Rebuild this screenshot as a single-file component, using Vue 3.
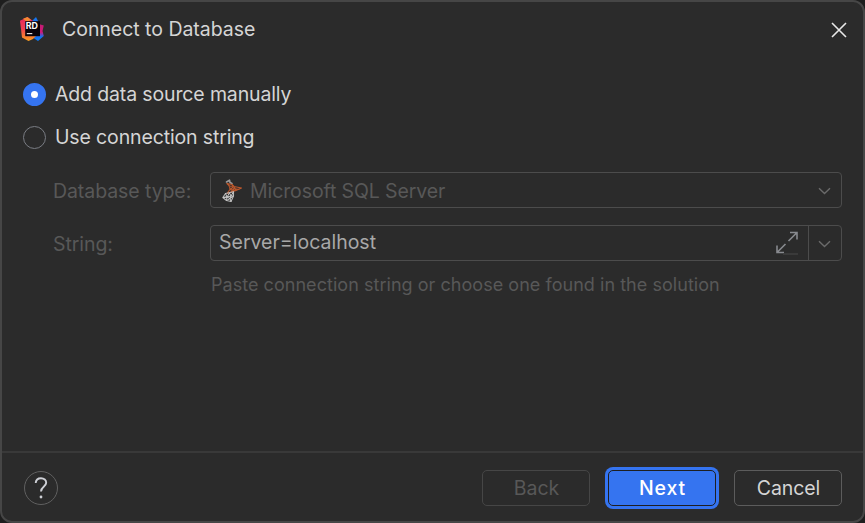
<script setup>
import { ref } from 'vue'

const mode = ref('manual')
const modes = [
  { id: 'manual', label: 'Add data source manually' },
  { id: 'string', label: 'Use connection string' },
]
</script>

<template>
  <div class="dialog">
    <header class="titlebar">
      <svg class="logo" viewBox="0 0 26 26">
        <defs>
          <linearGradient id="rd-left" x1="0" y1="0" x2="0" y2="1">
            <stop offset="0" stop-color="#e8265f" />
            <stop offset=".5" stop-color="#ee4150" />
            <stop offset="1" stop-color="#fba01e" />
          </linearGradient>
          <linearGradient id="rd-right" x1="0" y1="0" x2="0" y2="1">
            <stop offset="0" stop-color="#c21c72" />
            <stop offset=".5" stop-color="#d0197a" />
            <stop offset=".75" stop-color="#1670ee" />
            <stop offset="1" stop-color="#087cfa" />
          </linearGradient>
        </defs>
        <path d="M13 5 17 1 19 5 20 8H13Z" fill="#1676ef" />
        <path d="M18 7.5 24.8 9.5 23.5 15 24.8 20 19 25 14.5 22Z" fill="url(#rd-right)" />
        <path d="M1 4.8 8.5 1 14 5 17 20 14 23 9.5 25 3 21.5Z" fill="url(#rd-left)" />
        <path d="M4 2.8 8.5 1 12 4 8 6Z" fill="#f58a32" />
        <rect x="6.2" y="5.2" width="14.8" height="15" fill="#08030b" />
        <text x="6.8" y="12.8" class="logo-text" textLength="12.2" lengthAdjust="spacingAndGlyphs">RD</text>
        <rect x="7.8" y="17" width="5.5" height="1.2" fill="#ddd" />
      </svg>
      <h1>Connect to Database</h1>
      <button class="close" aria-label="Close">
        <svg viewBox="0 0 16 16"><path d="M1 1 15 15M15 1 1 15" /></svg>
      </button>
    </header>

    <main>
      <div class="radios">
        <label v-for="m in modes" :key="m.id" class="radio" @click="mode = m.id">
          <span class="dot" :class="{ on: mode === m.id }"></span>
          <span>{{ m.label }}</span>
        </label>
      </div>

      <div class="form">
        <span class="label">Database type:</span>
        <div class="field type-field">
          <svg class="mssql" viewBox="0 0 22 24">
            <g fill="none" stroke-linecap="round" stroke-linejoin="round">
              <path d="M5.5 3 8.5 1.2 9 3.5 11 4.5" stroke="#999" stroke-width="1.6" />
              <path d="M6 4.5 11 5.5 13 7.5 20.5 9 15 11.5 12 12.5 6 14.5 9 10.5 8.5 7Z M8 7 13 7.5 9 10.5 15 11.5 13 7.5 M10 13 13 9.5 18 10.5" stroke="#bc572c" stroke-width="1.2" />
              <path d="M4.5 14.5 12.5 12.8 12.5 17 10 22.5 5.5 21.5 1.8 18.5Z" stroke="#b8b8b8" stroke-width="1.1" />
              <path d="M4.5 14.5 6 18 2 18.5 6 18 5.5 21.5 9 19.5 6 18 8.5 14 10 17 6 18M10 17 12.5 12.8M10 17 9 19.5 10 22.5M10 17H12.5L9 19.5" stroke="#c8c8c8" stroke-width="1" />
            </g>
          </svg>
          <span class="value">Microsoft SQL Server</span>
          <svg class="chevron" viewBox="0 0 13 8"><path d="M1 1.2 6.5 6.6 12 1.2" /></svg>
        </div>

        <span class="label">String:</span>
        <div class="field">
          <span class="value text">Server=localhost</span>
          <svg class="expand" viewBox="0 0 22 24">
            <path d="M14 1.5H21V8.5M20.5 2 12.5 10M1 14.5V21.5H8M1.5 21 9.5 13" />
            <path class="under" d="M7 23H22" />
          </svg>
          <span class="split">
            <svg class="chevron" viewBox="0 0 13 8"><path d="M1 1.2 6.5 6.6 12 1.2" /></svg>
          </span>
        </div>

        <p class="hint">Paste connection string or choose one found in the solution</p>
      </div>
    </main>

    <footer>
      <button class="help" aria-label="Help">
        <svg viewBox="0 0 14 22">
          <path d="M1.7 6C1.9 2.8 4 1.2 7 1.2C10.1 1.2 12.2 3.1 12.2 5.8C12.2 9.5 7 9.5 7 14.6" />
          <circle cx="7" cy="20" r="1.4" />
        </svg>
      </button>
      <div class="buttons">
        <button class="btn disabled">Back</button>
        <button class="btn primary">Next</button>
        <button class="btn">Cancel</button>
      </div>
    </footer>
  </div>
</template>

<style>
body {
  background: #1e1e1e;
}
</style>

<style scoped>
.dialog {
  box-sizing: border-box;
  display: flex;
  flex-direction: column;
  width: 865px;
  height: 523px;
  border: 2px solid #464646;
  border-radius: 12px;
  background: #2b2b2b;
  color: #d5d5d5;
  font: 19.5px/24px Inter, sans-serif;
  overflow: hidden;
}
button {
  font: inherit;
  color: inherit;
  background: none;
  padding: 0;
}
.titlebar {
  display: flex;
  align-items: center;
  height: 54px;
  padding: 0 16px 0 17px;
}
.logo {
  width: 26px;
  height: 26px;
}
.logo-text {
  font: 700 8.8px Inter, sans-serif;
  fill: #fff;
}
h1 {
  flex: 1;
  margin: 0 0 0 17px;
  font: inherit;
  letter-spacing: -0.03px;
}
.close {
  display: flex;
  border: 0;
  padding: 1px 0.5px 0;
}
.close svg {
  width: 16px;
  height: 16px;
  fill: none;
  stroke: #e8e8e8;
  stroke-width: 1.6;
}
main {
  flex: 1;
}
.radios {
  display: flex;
  flex-direction: column;
  gap: 19px;
  padding: 26px 0 0 21px;
}
.radio {
  display: flex;
  align-items: center;
  gap: 9px;
  letter-spacing: -0.14px;
}
.dot {
  box-sizing: border-box;
  width: 23px;
  height: 23px;
  border: 1px solid #7a7d84;
  border-radius: 50%;
}
.dot.on {
  border: 8px solid #3574f0;
  background: #fff;
}
.form {
  display: grid;
  grid-template-columns: 157px 632px;
  grid-template-rows: 36px 36px auto;
  row-gap: 17px;
  margin: 23px 0 0 51px;
  color: #585858;
}
.label {
  padding-top: 7px;
  letter-spacing: -0.08px;
}
.field {
  box-sizing: border-box;
  display: flex;
  align-items: center;
  height: 36px;
  border: 1px solid #4c4c4c;
  border-radius: 4px;
}
.type-field {
  padding-top: 2px;
}
.mssql {
  width: 22px;
  height: 24px;
  margin-left: 10px;
}
.value {
  flex: 1;
  margin-left: 7px;
  letter-spacing: -0.1px;
}
.value.text {
  margin-left: 8px;
  padding-bottom: 2px;
  color: #a8a8a8;
  letter-spacing: 0;
}
.chevron {
  width: 13px;
  height: 8px;
  margin-right: 10px;
  fill: none;
  stroke: #6a6a6a;
  stroke-width: 1.4;
}
.expand {
  width: 22px;
  height: 24px;
  margin-right: 10px;
  fill: none;
  stroke: #888a8f;
  stroke-width: 1.6;
}
.expand .under {
  stroke: #404040;
}
.split {
  box-sizing: border-box;
  display: flex;
  align-items: center;
  height: 100%;
  padding: 2px 0 0 9px;
  border-left: 1px solid #4c4c4c;
}
.hint {
  grid-column: 2;
  margin: -5px 0 0 1px;
  font-size: 18px;
  letter-spacing: 0.04px;
}
footer {
  box-sizing: border-box;
  display: flex;
  align-items: center;
  justify-content: space-between;
  height: 70px;
  padding: 2px 21px 0 22px;
  border-top: 2px solid #393939;
}
.help {
  box-sizing: border-box;
  display: flex;
  align-items: center;
  justify-content: center;
  width: 34px;
  height: 34px;
  border: 1px solid #606060;
  border-radius: 50%;
}
.help svg {
  width: 14px;
  height: 22px;
  fill: none;
  stroke: #ced0d6;
  stroke-width: 1.9;
}
.help circle {
  fill: #ced0d6;
  stroke: none;
}
.buttons {
  display: flex;
  gap: 18px;
}
.btn {
  box-sizing: border-box;
  width: 108px;
  height: 36px;
  padding-left: 1px;
  border: 1px solid #5c5c5c;
  border-radius: 5px;
  letter-spacing: -0.1px;
}
.btn.disabled {
  border-color: #464646;
  color: #585858;
  letter-spacing: 0;
}
.btn.primary {
  border: 1px solid #1e1f22;
  background: #3574f0;
  color: #fff;
  font-weight: 550;
  letter-spacing: 0.9px;
  box-shadow: 0 0 0 3px #3574f0;
}
</style>
